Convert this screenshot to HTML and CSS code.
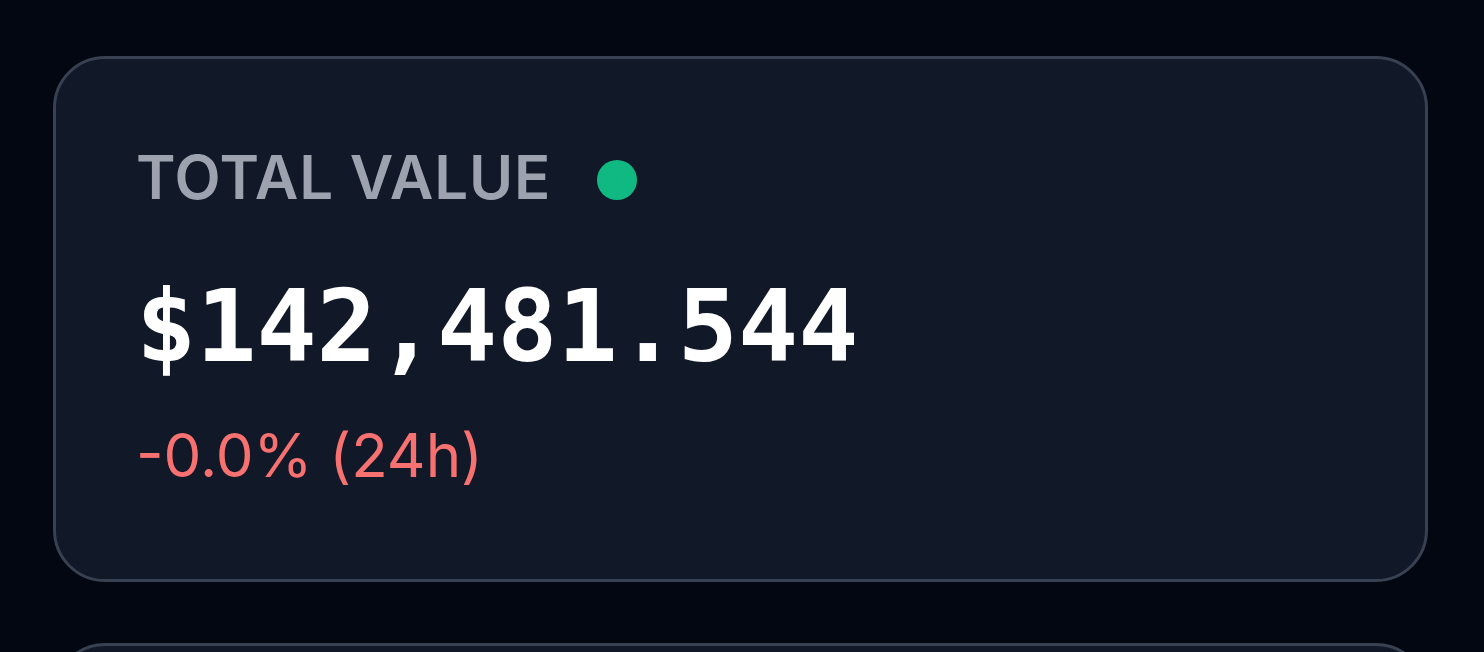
FILE: index.html
```html
<!DOCTYPE html>
<html lang="en">
<head>
<meta charset="utf-8">
<title>Total Value</title>
<link rel="stylesheet" href="styles.css">
</head>
<body>
  <main class="stack">
    <section class="card">
      <div class="label-row">
        <span class="label">TOTAL VALUE</span>
        <span class="live-dot"></span>
      </div>
      <div class="value">$142,481.544</div>
      <div class="change">-0.0% (24h)</div>
    </section>
    <section class="card card-next"></section>
  </main>
</body>
</html>
```
FILE: styles.css
```css
html, body {
  margin: 0;
  padding: 0;
  background: #030712;
  height: 100%;
  overflow: hidden;
}

body {
  font-family: Inter, "Noto Sans", "Liberation Sans", sans-serif;
}

.stack {
  display: flex;
  flex-direction: column;
  gap: 61px;
  padding: 56px 56px 0 53px;
}

.card {
  background: #111827;
  border: 3px solid #374151;
  border-radius: 52px;
  padding: 80px 80px 86px 80px;
}

.card-next {
  height: 400px;
  flex-shrink: 0;
}

.label-row {
  display: flex;
  align-items: center;
  gap: 46px;
  height: 76px;
}

.label {
  font-size: 60px;
  line-height: 76px;
  font-weight: 600;
  color: #9ca3af;
  letter-spacing: 0.8px;
}

.live-dot {
  width: 40px;
  height: 40px;
  border-radius: 50%;
  background: #10b981;
  margin-top: 6px;
}

.value {
  margin-top: 49px;
  font-family: "DejaVu Sans Mono", "Liberation Mono", monospace;
  font-weight: 700;
  font-size: 100px;
  line-height: 125px;
  color: #ffffff;
}

.change {
  margin-top: 28px;
  font-size: 60px;
  line-height: 76px;
  font-weight: 400;
  color: #f87171;
}
```
